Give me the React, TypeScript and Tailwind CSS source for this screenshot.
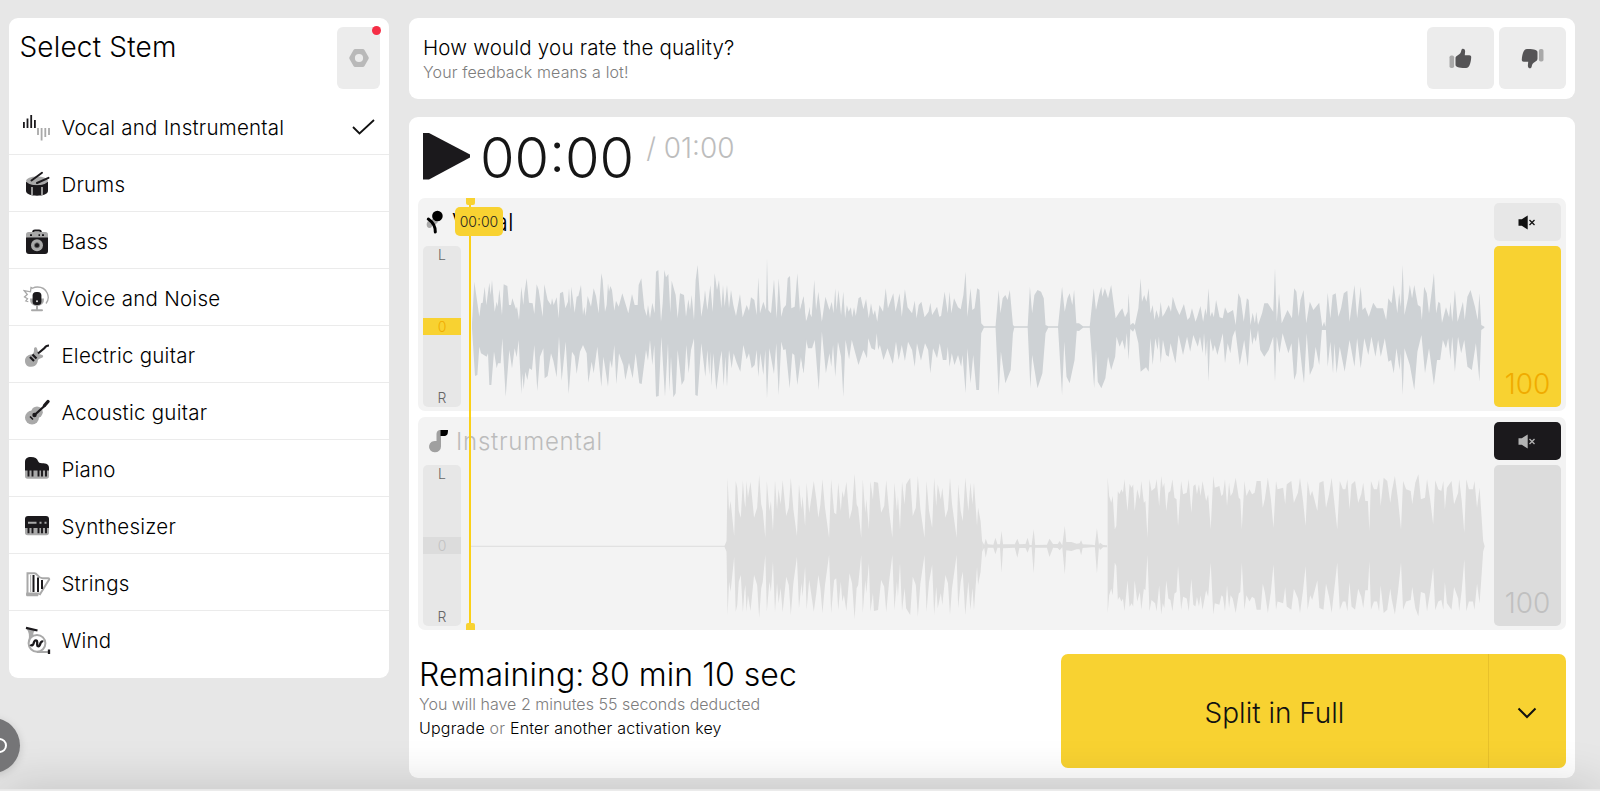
import { FC, ReactNode } from "react";

const INK = "#1b191c";
const GREY = "#a9a9a9";

const VocalIcon = () => (
  <svg width="28" height="28" viewBox="0 0 28 28" fill="none" strokeWidth="1.8">
    <path d="M.9 9v6M4.5 5.500v9.500M8.200 2v13M11.900 7v8" stroke={INK} />
    <path d="M15 15v7M18.600 15v12.500M22.300 15v9M26 15v7" stroke={GREY} />
  </svg>
);

const DrumsIcon = () => (
  <svg width="28" height="28" viewBox="0 0 28 28" fill="none">
    <path d="M3 12v9c0 3 5 4.700 11 4.700S25 24 25 21v-9z" fill={INK} />
    <path d="M9 17v8.300M19 17v8.300" stroke={GREY} strokeWidth="1.800" />
    <ellipse cx="14" cy="11" rx="11" ry="4.600" fill={GREY} />
    <path d="M3.400 12.500c2 2.800 6 3.300 10.600 3.300s8.600-.5 10.600-3.300" stroke={INK} strokeWidth="1.200" />
    <path d="M8.500 10.500L19 2.800M14 13L25.500 7.800" stroke={INK} strokeWidth="2" strokeLinecap="round" />
  </svg>
);

const BassIcon = () => (
  <svg width="28" height="28" viewBox="0 0 28 28" fill="none">
    <path d="M10 5.500c0-1.500.5-2 2-2h4c1.500 0 2 .5 2 2" stroke={INK} strokeWidth="1.800" />
    <rect x="3" y="5" width="22" height="7" rx="2.500" fill={GREY} />
    <path d="M3 10.500h22V24c0 2-1 3-3 3H6c-2 0-3-1-3-3z" fill={INK} />
    <path d="M7 8.200h2M15.500 8.200h1.500M19 8.200h2" stroke={INK} strokeWidth="1.800" />
    <circle cx="14" cy="18.300" r="6" fill={GREY} />
    <circle cx="14" cy="18.300" r="2.600" fill={INK} stroke="#777" strokeWidth=".8" />
  </svg>
);

const VoiceIcon = () => (
  <svg width="28" height="28" viewBox="0 0 28 28" fill="none" stroke={GREY}>
    <path
      d="M23 19.500c5-6 1-16.500-8.500-16.500-2 0-3.500.4-5 1.200L8 3.500l-.5 4.300L1 6.500l3.300 4L1.500 13l3 1.800L2.800 17l2.500.7"
      strokeWidth="1.300"
    />
    <path d="M8.500 14.500c-.3 4 2 6.200 5.500 6.200s5.800-2.200 5.500-6.200" strokeWidth="3" />
    <path d="M14 21v5M9 26.300h10" strokeWidth="2" strokeLinecap="round" />
    <rect x="9.600" y="8" width="8.800" height="13" rx="3.500" fill={INK} stroke="none" />
    <circle cx="14" cy="17.300" r="1" fill="#ddd" stroke="none" />
  </svg>
);

const ElectricGuitarIcon = () => (
  <svg width="28" height="28" viewBox="0 0 28 28" fill="none">
    <path
      d="M11 8c0-2 2.500-2.500 3-.5l1.500 5c1 1.500 3.500.8 4.500 2 .8 1.500-1 2.500-3 3-2.500.8-2 2-2.500 3.700-1 3-3.500 4.600-6.500 4.600-3.800 0-6-2.600-6-5.900 0-4 3-6.200 6-6.500 2.500-.3 3-1.500 3-5.400z"
      fill={GREY}
    />
    <path d="M7 16l4 4M9.500 13.500l4 4" stroke={INK} strokeWidth="2.200" />
    <path d="M15 12.500L21.500 7c1-1.700 2-2.500 4.500-2.500" stroke={INK} strokeWidth="2.200" />
  </svg>
);

const AcousticGuitarIcon = () => (
  <svg width="28" height="28" viewBox="0 0 28 28" fill="none">
    <circle cx="9" cy="19.600" r="7" fill={GREY} />
    <circle cx="14" cy="14.200" r="5.800" fill={GREY} />
    <path d="M7 18.500l3 3" stroke={INK} strokeWidth="1.600" />
    <circle cx="11.500" cy="17" r="2.200" fill={INK} />
    <path d="M11 17.500L22 7.500" stroke={INK} strokeWidth="2.300" />
    <path d="M21.500 7.500l3.500-4" stroke={INK} strokeWidth="3.400" strokeLinecap="round" />
  </svg>
);

const PianoIcon = () => (
  <svg width="28" height="28" viewBox="0 0 28 28" fill="none">
    <path d="M2 14h24v7c0 1.800-.8 2.700-2.500 2.700h-19C2.800 23.700 2 22.800 2 21z" fill={GREY} />
    <path d="M2 15.500V7c0-3.500 2-5 6-5s6 1.200 7 4c.7 1.800 1.500 2.200 4 2.200 4.500 0 7 1.300 7 4.800v2.500z" fill={INK} />
    <path d="M5.500 15v6.500M9.500 15v6.500M15.500 15v6.500M19 15v6.500M23 15v6.500" stroke={INK} strokeWidth="1.900" />
  </svg>
);

const SynthIcon = () => (
  <svg width="28" height="28" viewBox="0 0 28 28" fill="none">
    <path d="M2 13h24v7.500c0 1.800-.8 2.700-2.500 2.700h-19C2.800 23.200 2 22.300 2 20.500z" fill={GREY} />
    <path d="M2 16V7c0-2 1-3 3-3h18c2 0 3 1 3 3v9z" fill={INK} />
    <path d="M5 10.700h8.500M16.500 10.700h2M21.500 10.700h2" stroke={GREY} strokeWidth="2" />
    <path d="M5.500 15v6.200M9.500 15v6.200M15.500 15v6.200M19 15v6.200M23 15v6.200" stroke={INK} strokeWidth="1.900" />
  </svg>
);

const StringsIcon = () => (
  <svg width="28" height="28" viewBox="0 0 28 28" fill="none">
    <path
      d="M4.500 25V5M3.500 4.300h8c3 0 3.500 5 8 5h5.700c1 0 1.200.8.8 1.500L16.500 26"
      stroke={GREY}
      strokeWidth="2"
      strokeLinejoin="round"
    />
    <path d="M3.500 23.500h13l-1.500 3.800H4c-1 0-1.400-2-.5-3.800z" fill={GREY} />
    <path d="M10.500 6v17M15 8.500V23M19 11v9" stroke={INK} strokeWidth="2" />
    <path d="M7.700 6v17" stroke={GREY} strokeWidth="1" />
  </svg>
);

const WindIcon = () => (
  <svg width="28" height="28" viewBox="0 0 28 28" fill="none">
    <path d="M3.500 2.500l8.500 2c-1.500 1.500-2 3-1.500 5L5.500 14c1-4 .5-8-2-11.500z" fill={GREY} />
    <circle cx="14" cy="17.300" r="8.400" stroke={GREY} strokeWidth="2" />
    <path d="M14 26h11" stroke={GREY} strokeWidth="2" />
    <path
      d="M7.500 18.500c1 1.500 2.500 1 3-.8l.7-2c.8-2 3-1.700 3 .2v3c0 1.800 2 2 2.500.3l1-2.500c.5-1.300 1.500-1.500 2.500-1"
      stroke={INK}
      strokeWidth="2.300"
    />
    <path d="M3 1.800L14.500 4.500" stroke={INK} strokeWidth="2.300" />
    <path d="M26 23.500v4.500" stroke={INK} strokeWidth="2.300" />
  </svg>
);

const stems: { name: string; icon: ReactNode }[] = [
  { name: "Vocal and Instrumental", icon: <VocalIcon /> },
  { name: "Drums", icon: <DrumsIcon /> },
  { name: "Bass", icon: <BassIcon /> },
  { name: "Voice and Noise", icon: <VoiceIcon /> },
  { name: "Electric guitar", icon: <ElectricGuitarIcon /> },
  { name: "Acoustic guitar", icon: <AcousticGuitarIcon /> },
  { name: "Piano", icon: <PianoIcon /> },
  { name: "Synthesizer", icon: <SynthIcon /> },
  { name: "Strings", icon: <StringsIcon /> },
  { name: "Wind", icon: <WindIcon /> },
];

// Envelope points are "x,y" pairs, upper edge and lower edge of the wave
const vocalATop =
  "186,400 193,275 208,380 213,340 218,338 224,290 229,345 238,278 242,315 246,270 254,365 260,335 263,350 268,298 276,375 281,283 292,288 297,345 303,345 307,325 318,358 321,350 327,390 334,290 340,345 343,310 350,265 357,338 368,340 373,372 380,283 386,300 398,380 403,283 413,330 423,345 426,325 431,345 440,322 446,385 450,310 459,305 466,355 474,335 477,295 481,358 484,290 494,368 500,320 505,318 513,285 519,375 523,350 527,378 533,318 543,350 551,295 558,318 566,370 574,250 578,270 585,365 590,345 594,280 597,305 601,288 606,300 613,362 618,332 626,350 637,310 655,370 666,312 674,345 683,345 686,285 694,265 703,355 710,378 714,345 720,385 727,338 734,370 738,245 745,240 753,395 758,340 763,240 768,262 775,252 781,368 785,272 797,315 803,385 810,310 822,315 828,380 835,328 840,360 845,315 852,390 857,270 863,225 874,380 882,330 885,300 892,360 901,285 908,365 914,250 921,300 927,270 934,355 939,285 944,350 951,285 957,355 963,300 970,345 978,378 990,312 998,382 1010,345 1017,362 1023,322 1033,330 1040,375 1045,262 1050,370 1060,335 1068,360 1071,205 1075,360 1083,370 1092,268 1100,385 1106,265 1114,380 1120,355 1128,345 1133,265 1140,258 1144,355 1154,350 1162,250 1170,365 1181,320 1188,398 1200,350";
const vocalABottom =
  "186,415 195,558 202,555 208,470 213,490 230,500 234,490 238,585 244,585 252,485 260,535 264,520 272,520 277,445 287,620 298,480 306,535 314,475 320,502 326,450 334,612 337,550 341,598 346,545 352,570 358,535 366,540 373,465 382,603 390,500 400,475 404,565 413,558 423,490 430,512 440,562 447,440 455,572 467,455 476,612 486,485 494,498 500,552 510,485 519,465 530,490 535,578 545,515 551,550 562,470 574,590 580,500 585,530 594,590 600,510 606,535 613,465 619,583 627,490 640,525 646,570 657,518 668,565 677,490 688,580 695,582 708,480 714,512 720,450 727,525 733,465 738,620 746,618 754,440 765,620 774,460 778,605 783,500 790,622 797,610 803,480 815,585 823,570 829,465 836,550 843,480 852,445 856,615 863,618 874,460 886,560 892,480 898,555 901,485 904,588 910,490 919,600 930,510 935,482 941,588 946,500 951,590 957,480 965,535 971,490 980,518 991,545 1000,465 1010,508 1017,490 1025,535 1034,525 1040,480 1045,560 1051,490 1060,555 1066,480 1071,625 1078,475 1092,552 1099,460 1106,615 1114,455 1120,480 1127,478 1139,595 1147,490 1153,495 1162,585 1173,500 1181,550 1190,445 1200,475";
const vocalBTop =
  "0,240 8,198 13,275 22,250 26,262 32,150 36,240 41,185 49,275 57,200 66,240 71,215 75,250 79,175 82,240 86,180 92,255 97,185 101,265 105,225 109,245 114,232 117,262 121,232 125,258 131,205 136,200 142,238 148,207 154,265 159,220 164,255 168,240 173,275 178,225 186,245 192,175 197,235 209,190 214,245 223,190 228,260 235,178 241,232 251,250 257,212 261,265 266,225 272,215 279,262 288,245 292,218 296,255 307,230 312,260 316,258 324,185 331,250 335,185 339,250 345,205 354,232 360,238 366,195 371,125 375,260 382,175 386,240 391,235 397,175 402,180 406,280 412,289 438,289 445,180 449,250 454,205 460,195 465,210 470,180 477,285 480,289 510,289 515,170 520,250 525,195 532,180 540,185 546,205 550,285 556,289 578,289 587,170 593,245 599,205 604,190 610,225 614,180 619,280 625,280 634,289 649,289 658,175 663,240 670,195 675,170 677,200 683,175 690,205 697,165 707,265 716,245 722,235 728,262 734,245 736,190 740,285 746,278 750,285 758,235 763,145 766,215 771,195 776,215 781,175 785,250 790,225 794,270 798,240 804,265 808,215 812,260 817,250 826,225 831,245 835,200 843,235 850,255 860,222 868,270 873,262 878,235 886,275 890,260 897,228 903,275 908,235 911,255 915,175 919,260 923,245 927,262 932,210 940,262 947,265 952,232 958,250 970,240 976,285 982,190 987,205 994,275 1001,205 1005,210 1009,285 1014,248 1019,280 1022,245 1026,285 1035,250 1040,220 1048,220 1060,245 1064,115 1068,275 1073,190 1079,280 1092,240 1102,265 1107,175 1112,185 1117,260 1121,210 1128,180 1134,280 1142,215 1150,240 1163,218 1170,290 1174,275 1177,290 1182,188 1188,265 1193,195 1200,190 1206,260 1212,235 1218,190 1226,182 1231,275 1242,165 1248,265 1256,170 1260,240 1266,232 1274,260 1284,218 1292,235 1306,235 1313,270 1318,205 1325,220 1330,165 1338,250 1342,190 1346,230 1350,105 1354,255 1362,205 1366,165 1371,205 1376,165 1384,225 1390,230 1393,270 1398,170 1404,190 1409,250 1420,130 1425,250 1430,215 1434,220 1438,278 1447,232 1454,262 1457,215 1461,275 1467,180 1473,275 1485,215 1489,270 1495,200 1502,180 1512,230 1518,270 1522,190 1526,285 1533,290";
const vocalBBottom =
  "0,360 8,430 13,325 18,355 27,355 33,330 42,480 49,305 58,430 66,370 70,410 74,345 79,440 85,335 92,380 97,500 102,330 110,388 116,330 131,405 142,360 150,385 153,325 160,355 168,360 172,310 175,360 179,345 187,390 196,355 208,402 215,335 221,390 228,345 235,393 242,335 251,360 257,410 262,340 271,392 280,340 287,360 292,430 298,355 307,385 313,340 320,390 328,390 331,350 335,410 340,370 346,405 354,375 361,410 364,375 371,490 375,355 382,460 388,375 395,480 401,480 406,310 412,293 438,293 445,495 450,365 460,460 472,420 477,310 480,293 510,293 516,475 520,375 532,475 543,430 550,310 556,293 578,293 587,495 592,335 597,440 604,460 615,390 620,302 625,303 634,293 649,293 659,475 663,360 667,455 675,475 684,445 690,380 697,420 706,380 709,320 716,350 722,330 728,360 732,310 736,390 740,297 746,305 750,295 758,340 763,425 775,412 781,425 785,325 790,405 796,325 801,360 804,320 808,400 813,330 820,375 826,380 830,340 841,400 848,315 858,375 867,320 874,365 881,315 891,350 896,320 902,370 905,310 909,380 912,330 915,455 919,325 925,365 929,345 935,375 947,310 952,400 958,340 964,370 969,320 975,300 985,405 995,330 1003,410 1009,295 1013,345 1017,320 1021,335 1026,300 1031,360 1040,380 1050,360 1060,320 1064,455 1068,320 1074,370 1081,310 1094,370 1101,340 1107,450 1112,430 1117,320 1125,420 1129,460 1135,310 1142,435 1150,410 1155,350 1163,405 1169,300 1174,300 1178,300 1182,410 1188,335 1194,430 1197,340 1202,430 1209,350 1220,425 1231,330 1242,410 1248,325 1256,415 1264,325 1273,375 1280,320 1289,380 1295,330 1301,380 1310,325 1318,395 1324,390 1330,430 1336,355 1343,420 1346,370 1350,495 1354,355 1366,405 1376,480 1383,365 1392,315 1400,430 1409,355 1420,465 1427,390 1434,390 1440,330 1447,355 1452,325 1457,390 1461,320 1467,425 1474,320 1481,370 1488,330 1495,410 1505,420 1514,340 1522,455 1526,300 1533,293";
const bandA =
  "48,315 52,300 54,110 57,210 60,180 67,285 70,120 73,140 76,210 80,230 84,118 87,180 89,200 91,120 94,170 99,122 106,230 112,200 116,102 120,190 123,210 128,290 131,120 136,210 139,180 143,270 147,118 151,205 154,145 158,190 162,118 169,225 174,200 178,110 183,205 190,285 194,130 199,205 201,165 206,255 209,125 214,215 223,120 228,175 232,230 236,190 240,115 245,200 253,290 257,115 263,215 267,220 271,125 276,210 279,150 282,170 287,122 293,235 298,205 303,98 307,190 310,200 316,290 319,115 324,215 326,175 331,265 334,120 339,175 341,122 349,125 355,215 361,195 365,118 371,215 377,290 381,125 386,210 388,165 392,265 396,122 401,190 404,130 412,110 417,225 423,200 427,105 432,205 440,290 444,120 449,210 455,260 459,110 463,195 466,130 472,175 475,140 481,230 486,205 490,110 494,190 503,290 506,130 511,210 515,240 520,110 526,210 530,125 534,190 537,125 543,255 545,200 550,240 553,300";
const quietTop =
  "557,312 560,293 564,310 575,311 579,290 583,310 588,310 591,270 594,310 617,310 622,293 626,310 638,309 642,290 646,312 650,312 654,265 657,312 680,311 685,293 692,309 701,309 705,300 710,313 715,255 718,303 728,303 738,308 744,307 747,298 750,310 768,311 774,313 778,262 782,312 784,305 790,312 798,313";
const quietBottom =
  "557,320 560,350 564,320 575,320 579,340 583,320 588,320 591,395 594,322 617,320 622,350 626,321 638,321 642,335 646,319 650,319 654,397 657,320 680,320 685,348 692,320 701,321 705,328 710,319 715,400 718,328 728,330 738,325 744,325 747,343 750,321 768,319 774,319 778,397 782,319 784,327 790,319 798,319";
const bandB =
  "799,110 802,165 806,185 809,165 813,265 816,255 819,150 822,160 826,145 829,155 832,115 838,210 842,128 846,140 849,130 852,210 857,145 862,175 865,120 870,185 873,180 877,290 881,115 885,150 892,140 895,115 900,195 904,105 907,140 910,125 914,210 918,155 922,150 926,115 930,170 934,175 937,255 943,120 947,160 954,155 958,115 963,215 967,135 971,130 974,160 978,130 981,165 985,120 992,180 996,160 1001,265 1006,105 1009,140 1018,135 1022,165 1025,160 1029,115 1033,195 1037,125 1040,165 1044,155 1050,110 1056,170 1059,175 1062,265 1067,120 1071,165 1077,145 1082,160 1087,155 1091,120 1099,120 1103,200 1107,175 1113,110 1119,175 1124,260 1129,120 1132,145 1143,140 1147,190 1150,130 1159,120 1164,185 1172,155 1176,110 1182,180 1187,255 1191,120 1196,165 1200,150 1210,210 1214,125 1222,120 1227,200 1233,160 1238,110 1243,180 1249,265 1254,120 1260,145 1265,145 1269,115 1273,205 1277,130 1284,120 1290,185 1296,160 1300,125 1304,180 1309,180 1312,270 1315,120 1321,145 1327,145 1331,115 1334,195 1340,110 1347,120 1353,185 1356,150 1362,105 1368,175 1374,265 1378,120 1384,145 1393,150 1396,190 1402,125 1408,100 1413,175 1421,170 1425,115 1431,175 1437,250 1441,118 1447,145 1453,150 1457,120 1460,205 1464,140 1473,120 1478,190 1486,155 1488,115 1493,180 1498,275 1502,115 1507,145 1515,145 1518,120 1523,200 1528,140 1532,230 1535,300 1538,316";

const outline = (top: string, bottom: string) =>
  `${top} ${bottom.split(" ").reverse().join(" ")}`;

const mirror = (top: string, axis: number, gain: number) =>
  top
    .split(" ")
    .map((p) => {
      const [x, y] = p.split(",").map(Number);
      return `${x},${axis + (axis - y) * gain}`;
    })
    .join(" ");

const VocalWave = () => (
  <svg width="1033" height="161" viewBox="0 0 1033 161" className="fill-[#ced2d5]">
    <polygon points={outline(vocalATop, vocalABottom)} transform="translate(-51 -56) scale(.33333)" />
    <polygon points={outline(vocalBTop, vocalBBottom)} transform="translate(339 -16) scale(.44643 .33333)" />
  </svg>
);

const InstrumentalWave = () => (
  <svg width="1033" height="161" viewBox="0 0 1033 161" className="fill-[#dddddd]">
    <rect x="9" y="80.800" width="256" height="1" />
    <g transform="translate(239 -24) scale(.5102 .33333)">
      <polygon points={outline(bandA, mirror(bandA, 316, 1))} />
      <polygon points={outline("553,300 " + quietTop, "553,332 " + quietBottom)} />
      <polygon points={outline(bandB, mirror(bandB, 316, 0.97))} />
    </g>
  </svg>
);

const MicIcon = () => (
  <svg width="18" height="24" viewBox="0 0 18 24" fill="none">
    <ellipse cx="3.500" cy="14.500" rx="2.800" ry="3.400" fill={GREY} />
    <path d="M3 12l5-4.500 4 4.500-4 4z" fill={GREY} />
    <circle cx="11.400" cy="6" r="5.300" fill="#000" />
    <path d="M2.300 9c4.500 3.200 7.200 6.500 7 13" stroke="#000" strokeWidth="3" strokeLinecap="round" />
  </svg>
);

const NoteIcon = () => (
  <svg width="20" height="24" viewBox="0 0 20 24" fill="none">
    <path d="M8.500 6C8.500 2.500 9.500 1 13 1v16.500a6 5.700 0 1 1-4.500-5.400z" fill="#a0a0a0" />
    <path d="M12.500 1H20c0 4.500-1 6-4.500 6h-3z" fill="#000" />
  </svg>
);

const MuteIcon = ({ color }: { color: string }) => (
  <svg width="18" height="15" viewBox="0 0 18 15" fill="none">
    <path d="M.5 4.200h3.300L9.700.5v14l-5.900-3.700H.5z" fill={color} />
    <path d="M11.500 5l5 5M16.500 5l-5 5" stroke={color} strokeWidth="1.300" />
  </svg>
);

const Thumb = ({ down }: { down?: boolean }) => (
  <svg width="23" height="21" viewBox="0 0 23 21" className={down ? "rotate-180" : ""}>
    <rect x=".5" y="7.500" width="4.600" height="12.500" rx="1.800" fill="#a9a9a9" />
    <path
      d="M6.500 10.500c0-1.700.8-2.300 2.300-3.200 2.300-1.400 3.200-2.500 3.500-4.800.2-2.600 3.700-2.400 3.800.6.100 1.600-.3 2.700-.3 4.200h4.400c1.500 0 2.100.8 2 2.200-.2 3-.7 5.600-1.800 8-.8 1.700-1.600 2.400-3.300 2.500-3 .2-6.300-.2-8.700-1-1.300-.5-1.900-1.100-1.900-2.500z"
      fill="#555456"
    />
  </svg>
);

interface TrackProps {
  title: string;
  icon: ReactNode;
  wave: ReactNode;
  muted?: boolean;
}

const Track: FC<TrackProps> = ({ title, icon, wave, muted }) => (
  <div className="h-[213px] rounded-[7px] bg-[#f3f3f3] px-[5px] pt-[5px]">
    <div className="flex h-[38px] items-center">
      <div className={muted ? "w-[28px] pl-[5px]" : "w-[28px] pl-[3px]"}>{icon}</div>
      <div
        className={
          muted
            ? "pl-[5px] pt-[2px] text-[24px] font-[340] tracking-[0.75px] text-[#bcbcbc]"
            : "pl-px pt-[2px] text-[24px] font-[340] text-black"
        }
      >
        {title}
      </div>
      <button
        className={`ml-auto flex h-[38px] w-[67px] items-center justify-center rounded-[5px] ${
          muted ? "bg-[#1b191c]" : "bg-[#e7e7e7]"
        }`}
      >
        <MuteIcon color={muted ? "#b4b4b4" : "#111111"} />
      </button>
    </div>
    <div className="mt-[5px] flex h-[161px]">
      <div className="flex w-[38px] shrink-0 flex-col items-center justify-between rounded-[5px] bg-[#e7e7e7] text-[14px] font-[340] leading-[18px] text-[#666666]">
        <span>L</span>
        <span
          className={`w-full text-center leading-[17px] ${
            muted ? "bg-[#dcdcdc] text-[#c2c2c2]" : "bg-[#f8d231] text-[#f0ab00]"
          }`}
        >
          0
        </span>
        <span>R</span>
      </div>
      <div className="flex-1 overflow-hidden">{wave}</div>
      <div
        className={`flex w-[67px] shrink-0 items-end justify-center rounded-[5px] pb-[6px] text-[28px] font-[340] leading-[34px] ${
          muted ? "bg-[#dcdcdc] text-[#c0c0c0]" : "bg-[#f8d231] text-[#f0ab00]"
        }`}
      >
        100
      </div>
    </div>
  </div>
);

const Sidebar: FC = () => (
  <aside className="h-[660px] w-[380px] shrink-0 rounded-[9px] bg-white">
    <div className="flex h-[80px] items-start justify-between">
      <h1 className="pl-[10px] pt-[11px] text-[28px] font-[340] leading-[36px] tracking-[0.2px]">Select Stem</h1>
      <button className="relative mr-[9px] mt-[9px] flex h-[62px] w-[43px] items-center justify-center rounded-[6px] bg-[#ececec]">
        <svg width="20" height="18" viewBox="0 0 20 18">
          <path
            fillRule="evenodd"
            d="M6.200 0h7.600c.8 0 1.300.3 1.700 1l4 7c.4.700.4 1.300 0 2l-4 7c-.4.700-.9 1-1.700 1H6.200c-.8 0-1.300-.3-1.700-1l-4-7c-.4-.7-.4-1.300 0-2l4-7c.4-.7.900-1 1.700-1zM10 4.900a4.100 4.100 0 1 0 0 8.200 4.100 4.100 0 0 0 0-8.200z"
            fill="#b9b9b9"
          />
        </svg>
        <span className="absolute -right-px -top-px size-[9px] rounded-full bg-[#f52d45]" />
      </button>
    </div>
    <ul>
      {stems.map((stem, i) => (
        <li
          key={stem.name}
          className="flex h-[57px] items-center border-b border-[#ebebeb] pl-[14px] pr-[14px] pt-px last:border-transparent"
        >
          {stem.icon}
          <span className="pl-[10px] pt-[3px] text-[20.500px] font-[340] tracking-[0.25px] text-black">{stem.name}</span>
          {i === 0 && (
            <svg width="23" height="16" viewBox="0 0 23 16" fill="none" className="ml-auto">
              <path d="M1 8l6.500 6.500L22 1" stroke="#111" strokeWidth="1.800" />
            </svg>
          )}
        </li>
      ))}
    </ul>
  </aside>
);

const Feedback: FC = () => (
  <section className="flex h-[80.500px] items-center rounded-[9px] bg-white pl-[14px] pr-[9px]">
    <div className="pt-px">
      <p className="text-[20.500px] font-[340] leading-[27px] tracking-[0.2px] text-black">
        How would you rate the quality?
      </p>
      <p className="text-[16px] font-[340] leading-[22px] tracking-[0.12px] text-[#7d7d7d]">
        Your feedback means a lot!
      </p>
    </div>
    <div className="ml-auto flex gap-[5px]">
      <button className="flex h-[62px] w-[67px] items-center justify-center rounded-[6px] bg-[#ececec]">
        <Thumb />
      </button>
      <button className="flex h-[62px] w-[67px] items-center justify-center rounded-[6px] bg-[#ececec]">
        <Thumb down />
      </button>
    </div>
  </section>
);

const Player: FC = () => (
  <section className="mt-[18.500px] h-[661px] rounded-[9px] bg-white px-[9px]">
    <div className="flex h-[81px] pl-[5px] pt-[15px]">
      <svg width="48" height="48" viewBox="0 0 48 48">
        <path d="M0 1h6l41 21.500v3L6 47.500H0z" fill={INK} />
      </svg>
      <span className="pl-[9px] pt-px text-[56px] font-[340] leading-[50px] text-[#161616]">00:00</span>
      <span className="pl-[12px] text-[28px] font-[340] leading-[32px] text-[#bdbdbd]">/ 01:00</span>
    </div>
    <div className="relative flex flex-col gap-[6px]">
      <Track title="Vocal" icon={<MicIcon />} wave={<VocalWave />} />
      <Track title="Instrumental" icon={<NoteIcon />} wave={<InstrumentalWave />} muted />
      {/* playhead */}
      <div className="absolute left-[48px] top-0 flex h-full w-[9px] flex-col items-center">
        <span className="h-[7px] w-[9px] rounded-b-[2px] bg-[#f8d231]" />
        <span className="w-[2px] flex-1 bg-[#fbd016]" />
        <span className="h-[7px] w-[9px] rounded-t-[2px] bg-[#f8d231]" />
      </div>
      <span className="absolute left-[37px] top-[9px] flex h-[29px] w-[48px] items-center justify-center rounded-[5px] bg-[#f8d231] text-[14px] font-[340] text-[#222222]">
        00:00
      </span>
    </div>
    <div className="flex justify-between pt-[24px]">
      <div className="pl-px pt-[2px]">
        <p className="text-[32px] font-[340] leading-[38px] tracking-[0.05px] text-black">
          Remaining:<span className="-ml-[3px]"> 80 min 10 sec</span>
        </p>
        <p className="-mt-px text-[16px] font-[340] leading-[22px] text-[#7d7d7d]">
          You will have 2 minutes 55 seconds deducted
        </p>
        <p className="text-[16px] font-[340] leading-[26px] tracking-[0.2px] text-[#7d7d7d]">
          <a className="text-black">Upgrade</a> or <a className="text-black">Enter another activation key</a>
        </p>
      </div>
      <div className="flex h-[114px] w-[505px] overflow-hidden rounded-[7px] bg-[#f8d231]">
        <button className="w-[428px] border-r border-[#e8c12a] pt-[3px] text-[28px] font-[340] text-[#111111]">
          Split in Full
        </button>
        <button className="flex flex-1 items-center justify-center pt-[4px]">
          <svg width="20" height="12" viewBox="0 0 20 12" fill="none">
            <path d="M1.500 1.500L10 10l8.500-8.500" stroke="#111" strokeWidth="2" />
          </svg>
        </button>
      </div>
    </div>
  </section>
);

export default function App() {
  return (
    <div className="relative h-[791px] w-[1600px] overflow-hidden bg-[#e7e7e7] font-['Inter',sans-serif] text-black">
      <div className="flex gap-[19.600px] pl-[9.400px] pt-[18px]">
        <Sidebar />
        <main className="w-[1166px]">
          <Feedback />
          <Player />
        </main>
      </div>
      {/* shade over the bottom edge */}
      <div className="pointer-events-none absolute inset-x-0 top-[789px] h-[40px] shadow-[0_0_50px_rgba(0,0,0,0.18)]" />
      <div className="absolute inset-x-0 bottom-0 h-px bg-[#ebebeb]" />
      <div className="absolute -left-[35px] top-[718px] size-[55px] rounded-full bg-[#757577] shadow-[0_2px_8px_rgba(0,0,0,0.15)]">
        <span className="absolute left-[27px] top-[20px] size-[15px] rounded-full border-[2.500px] border-white" />
      </div>
    </div>
  );
}
